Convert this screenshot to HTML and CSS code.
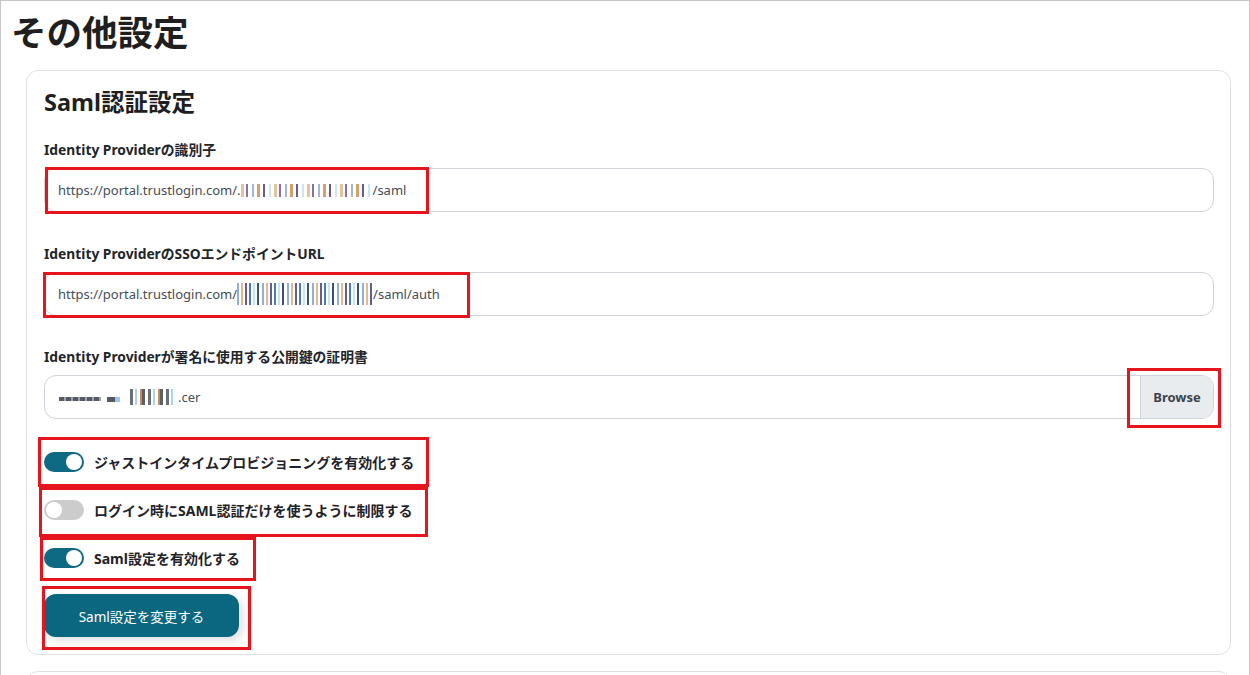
FILE: index.html
```html
<!DOCTYPE html>
<html lang="ja">
  <head>
    <meta charset="UTF-8" />
    <meta name="viewport" content="width=device-width, initial-scale=1.0" />
    <title>その他設定</title>
    <link rel="stylesheet" href="styles.css">
  </head>
  <body>
    <div class="page">
      <h1 class="title">その他設定</h1>

      <section class="card">
        <h2 class="card-title">Saml認証設定</h2>

        <div class="field">
          <label class="field-label">Identity Providerの識別子</label>
          <div class="input">https://portal.trustlogin.com/.<span class="redact redact-a"></span>/saml</div>
        </div>

        <div class="field field-next">
          <label class="field-label">Identity ProviderのSSOエンドポイントURL</label>
          <div class="input">https://portal.trustlogin.com/<span class="redact redact-b"></span>/saml/auth</div>
        </div>

        <div class="field field-last">
          <label class="field-label">Identity Providerが署名に使用する公開鍵の証明書</label>
          <div class="input input-file">
            <span class="file-name">
              <span class="blur blur-1"></span>
              <span class="blur blur-2"></span>
              <span class="blur blur-3"></span>.cer
            </span>
            <span class="browse">Browse</span>
          </div>
        </div>

        <div class="switches">
          <div class="switch-row">
            <span class="switch on"></span>
            <span class="switch-label">ジャストインタイムプロビジョニングを有効化する</span>
          </div>
          <div class="switch-row">
            <span class="switch"></span>
            <span class="switch-label">ログイン時にSAML認証だけを使うように制限する</span>
          </div>
          <div class="switch-row">
            <span class="switch on"></span>
            <span class="switch-label">Saml設定を有効化する</span>
          </div>
        </div>

        <button class="submit">Saml設定を変更する</button>
      </section>

      <section class="card card-next"></section>

      <!-- 注記の赤枠 -->
      <div class="mark mark-1"></div>
      <div class="mark mark-2"></div>
      <div class="mark mark-3"></div>
      <div class="mark mark-4"></div>
      <div class="mark mark-5"></div>
      <div class="mark mark-6"></div>
      <div class="mark mark-7"></div>
    </div>
  </body>
</html>
```

FILE: styles.css
```css
* {
  margin: 0;
  padding: 0;
  box-sizing: border-box;
  font-family: "Noto Sans", "Noto Sans CJK JP", sans-serif;
}

body {
  background: #fff;
  overflow: hidden;
}

.page {
  position: relative;
  width: 1250px;
  height: 675px;
  overflow: hidden;
  border: 1px solid #c6c6c6;
  border-bottom: none;
  padding-top: 9px;
  color: #212529;
}

.title {
  font-size: 35.5px;
  line-height: 44px;
  font-weight: 700;
  padding-left: 10px;
  color: #1f1f1f;
}

.card {
  margin: 16px 18px 0 25px;
  border: 1px solid #dee2e6;
  border-radius: 12px;
  padding: 16px 16px 17px 17px;
}

.card-next {
  height: 40px;
}

.card-title {
  font-size: 23.5px;
  line-height: 30px;
  font-weight: 700;
  color: #1f1f1f;
}

.field {
  margin-top: 23px;
}

.field-next {
  margin-top: 32px;
}

.field-last {
  margin-top: 31px;
}

.field-label {
  display: block;
  font-size: 13.8px;
  line-height: 20px;
  font-weight: 700;
  margin-bottom: 8px;
}

.input {
  height: 44px;
  border: 1px solid #ced4da;
  border-radius: 12px;
  display: flex;
  align-items: center;
  padding-left: 13px;
  font-size: 13px;
  color: #454d55;
}

.redact {
  display: inline-block;
  height: 13px;
}

.redact-a {
  width: 132px;
  background: repeating-linear-gradient(90deg,
    #e8c29a 0 3px, transparent 3px 5px,
    #8a6fa0 5px 7px, transparent 7px 11px,
    #9fb8dc 11px 13px, transparent 13px 16px,
    #d7a06a 16px 19px, transparent 19px 22px,
    #6d5a8c 22px 24px, transparent 24px 28px,
    #c9e6f2 28px 30px, transparent 30px 33px);
}

.redact-b {
  width: 136px;
  height: 22px;
  background: repeating-linear-gradient(90deg,
    #8fb0dc 0 2px, transparent 2px 4px,
    #e6b98c 4px 6px, transparent 6px 8px,
    #6a5b8e 8px 10px, transparent 10px 12px,
    #4f79b8 12px 14px, transparent 14px 16px,
    #c6e4f3 16px 18px, transparent 18px 20px,
    #3c4e7a 20px 22px, transparent 22px 25px);
}

.input-file {
  padding-left: 0;
  overflow: hidden;
}

.file-name {
  flex: 1;
  display: flex;
  align-items: center;
  padding-left: 14px;
  color: #454d55;
}

.blur {
  display: inline-block;
  background: #5b6068;
}

.blur-1 {
  width: 42px;
  height: 4px;
  margin-top: 4px;
  background: repeating-linear-gradient(90deg, #555b63 0 5px, #a0a4aa 5px 7px);
}

.blur-2 {
  width: 13px;
  height: 5px;
  margin: 4px 0 0 6px;
  background: linear-gradient(90deg, #555b63 0 8px, #9fc7ee 8px 13px);
}

.blur-3 {
  width: 46px;
  height: 16px;
  margin: 0 2px 0 10px;
  background: repeating-linear-gradient(90deg,
    #6b6f76 0 3px, transparent 3px 5px,
    #a9d3f2 5px 7px, transparent 7px 10px,
    #c8895a 10px 12px, #5b6068 12px 15px, transparent 15px 18px);
}

.browse {
  width: 73px;
  height: 100%;
  display: flex;
  align-items: center;
  justify-content: center;
  background: #e9ecef;
  border-left: 1px solid #ced4da;
  font-size: 13px;
  font-weight: 700;
  color: #3d4349;
}

.switches {
  margin-top: 19px;
}

.switch-row {
  height: 48px;
  display: flex;
  align-items: center;
  gap: 10px;
}

.switch {
  position: relative;
  width: 40px;
  height: 20px;
  border-radius: 10px;
  background: #cccccc;
  flex-shrink: 0;
}

.switch::after {
  content: "";
  position: absolute;
  top: 2px;
  left: 2px;
  width: 16px;
  height: 16px;
  border-radius: 50%;
  background: #fff;
}

.switch.on {
  background: #0e6a82;
}

.switch.on::after {
  left: 22px;
}

.switch-label {
  font-size: 14px;
  font-weight: 700;
  color: #1f2328;
}

.submit {
  margin-top: 12px;
  width: 195px;
  height: 43px;
  border: none;
  border-radius: 12px;
  background: #0b6780;
  color: #fff;
  font-size: 13.5px;
  box-shadow: 4px 4px 10px rgba(0, 0, 0, 0.12);
}

.mark {
  position: absolute;
  border: 3px solid #e5141d;
}

.mark-1 { left: 44px; top: 166px; width: 384px; height: 47px; }
.mark-2 { left: 42px; top: 271px; width: 427px; height: 46px; }
.mark-3 { left: 1126px; top: 367px; width: 94px; height: 60px; }
.mark-4 { left: 37px; top: 436px; width: 391px; height: 50px; }
.mark-5 { left: 38px; top: 486px; width: 389px; height: 50px; }
.mark-6 { left: 39px; top: 536px; width: 216px; height: 44px; }
.mark-7 { left: 41px; top: 585px; width: 209px; height: 64px; }
```
